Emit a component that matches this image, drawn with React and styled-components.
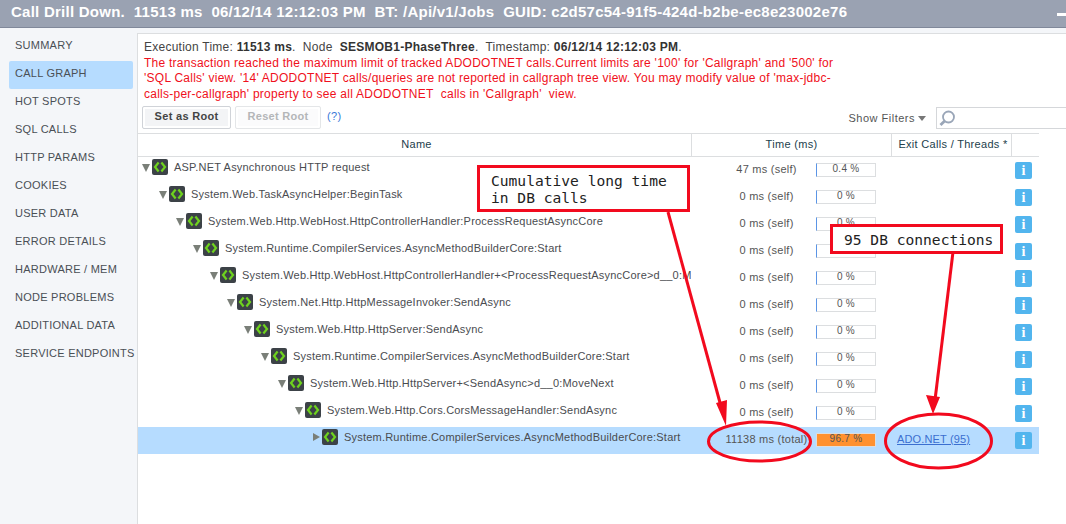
import React from "react";
import styled, { createGlobalStyle } from "styled-components";

const Global = createGlobalStyle`
  html, body { margin: 0; padding: 0; background: #f4f6f9; overflow: hidden; }
  body { font-family: "Liberation Sans", Arial, sans-serif; }
`;
const Page = styled.div`position: relative; width: 1066px; height: 524px; overflow: hidden; display: flex; flex-direction: column;`;
const TitleBar = styled.div`
  height: 27px; flex: none; background: #9aa2b2; border-bottom: 1px solid #80889a; color: #fff; font-weight: 700;
  font-size: 15px; letter-spacing: .25px; line-height: 23px; padding-left: 11px; white-space: pre; position: relative;
`;
const Minimize = styled.span`position: absolute; right: 0; top: 13px; width: 9px; height: 3px; background: #fff;`;
const Body = styled.div`flex: 1; display: flex; min-height: 0;`;
const Sidebar = styled.nav`width: 137px; flex: none; padding: 5px 4px 0 9px; box-sizing: border-box;`;
const NavItem = styled.div`
  height: 28px; line-height: 25px; padding-left: 6px; font-size: 11px; letter-spacing: .25px; color: #4a4f55; border-radius: 2px; white-space: nowrap;
  background: ${p => p.$active ? "#b6dcff" : "transparent"};
`;
const Panel = styled.main`flex: 1; margin-top: 5px; background: #fff; border-top: 1px solid #dcdee0; border-left: 1px solid #dcdee0; min-width: 0;`;
const Info = styled.div`padding: 6px 6px 0 6px; font-size: 12px; line-height: 15.5px; width: 705px; height: 66px; color: #444; letter-spacing: .25px;`;
const Strong = styled.b`color: #333;`;
const Warning = styled.div`color: #f01020;`;
const Toolbar = styled.div`height: 27px; display: flex; align-items: flex-start; padding-left: 4px;`;
const Button = styled.div`
  height: 23px; box-sizing: border-box; border: 1px solid ${p => p.$off ? "#e4e6e8" : "#d0d3d8"}; border-radius: 2px; margin-right: 4px;
  box-shadow: inset 0 0 0 2px #fff; background: ${p => p.$off ? "#fbfbfc" : "#f3f4f6"};
  font-size: 11px; font-weight: 700; letter-spacing: .3px; line-height: 19px; text-align: center; width: ${p => p.$w}px;
  color: ${p => p.$off ? "#b4b6b8" : "#444"};
`;
const Help = styled.span`color: #3b78d8; font-size: 11px; margin-left: 2px; letter-spacing: .3px; line-height: 21px;`;
const Filters = styled.div`margin-left: auto; height: 23px; display: flex; align-items: center; font-size: 11px; letter-spacing: .5px; color: #555;`;
const Caret = styled.i`width: 0; height: 0; border: 4.5px solid transparent; border-top: 5px solid #777; border-bottom: 0; margin: 1px 10px 0 3px;`;
const Search = styled.div`width: 130px; height: 22px; margin-top: 1px; box-sizing: border-box; border: 1px solid #d5d7da; border-right: 0; padding-left: 2px; display: flex; align-items: center;`;
const Table = styled.div`width: 901px; border-top: 1px solid #dcdee0;`;
const Head = styled.div`display: grid; grid-template-columns: 553px 200px 120px 28px; height: 22px; border-bottom: 1px solid #dcdee0;`;
const HeadCell = styled.div`
  font-size: 11px; letter-spacing: .3px; color: #23404c; text-align: center; line-height: 20px; white-space: nowrap; overflow: hidden;
  padding-left: ${p => p.$shift || 0}px;
  & + & { border-left: 1px solid #dcdee0; }
`;
const Row = styled.div`display: grid; grid-template-columns: 553px 125px 75px 120px 28px; height: 27px; background: ${p => p.$sel ? "#b6dcff" : "transparent"};`;
const NameCell = styled.div`display: flex; align-items: center; height: 20px; white-space: nowrap; overflow: hidden; color: #4a4c50; font-size: 11px; letter-spacing: .21px;`;
const Tri = styled.i`
  flex: none; width: 0; height: 0; margin-right: 2px;
  ${p => p.$closed
    ? "border-left: 7px solid #7a7f78; border-top: 4.5px solid transparent; border-bottom: 4.5px solid transparent; margin-left: 1px; margin-right: 2px;"
    : "border-top: 8px solid #7a7f78; border-left: 4px solid transparent; border-right: 4px solid transparent; margin-top: 2px;"}
`;
const NodeIcon = styled.svg`flex: none; width: 16px; height: 16px; margin-right: 6px; display: block;`;
const TimeCell = styled.div`font-size: 11px; letter-spacing: .25px; color: #555; text-align: center; padding: 6px 0 0 26px; line-height: 12px; white-space: nowrap;`;
const Bar = styled.div`
  width: 60px; height: 14px; box-sizing: border-box; margin-top: 6px; border: 1px solid #dcdee0;
  border-left: 1px solid #5b95e6; text-align: center; font-size: 10px; line-height: 10px; letter-spacing: .3px; color: #555;
  ${p => p.$full && "background: #ff9130; border-color: #ddd;"}
`;
const ExitCell = styled.div`padding: 6px 0 0 6px; font-size: 11px; line-height: 12px; letter-spacing: .15px;`;
const ExitLink = styled.a`color: #3b6fd0; text-decoration: underline;`;
const InfoCell = styled.div`padding: 5px 0 0 4px;`;
const InfoBtn = styled.div`
  width: 17px; height: 17px; background: #52b5ee; border-radius: 2px; color: #fff; font-weight: 700; font-size: 14px; line-height: 17px; text-align: center; font-family: "Liberation Serif", serif;
`;
const Callout = styled.div`
  position: absolute; left: ${p => p.$x}px; top: ${p => p.$y}px; width: ${p => p.$w}px; height: ${p => p.$h}px; box-sizing: border-box;
  background: #fff; border: 3px solid #f20a1e; font-family: "DejaVu Sans Mono", monospace; font-size: 14.6px; line-height: 17px; color: #222; white-space: pre;
  padding: ${p => p.$pad};
`;
const Overlay = styled.svg`position: absolute; left: 0; top: 0; pointer-events: none;`;

const Node = () => (
  <NodeIcon viewBox="0 0 16 16">
    <rect width="16" height="16" rx="2" fill="#3c4247" />
    <path d="M6.6 3.5 3 8l3.6 4.5M9.4 3.5 13 8l-3.6 4.5" fill="none" stroke="#6fd21e" strokeWidth="2.2" />
  </NodeIcon>
);

const nav = ["SUMMARY", "CALL GRAPH", "HOT SPOTS", "SQL CALLS", "HTTP PARAMS", "COOKIES", "USER DATA", "ERROR DETAILS", "HARDWARE / MEM", "NODE PROBLEMS", "ADDITIONAL DATA", "SERVICE ENDPOINTS"];
const rows = [
  ["ASP.NET Asynchronous HTTP request", "47 ms (self)", "0.4 %"],
  ["System.Web.TaskAsyncHelper:BeginTask", "0 ms (self)", "0 %"],
  ["System.Web.Http.WebHost.HttpControllerHandler:ProcessRequestAsyncCore", "0 ms (self)", "0 %"],
  ["System.Runtime.CompilerServices.AsyncMethodBuilderCore:Start", "0 ms (self)", "0 %"],
  ["System.Web.Http.WebHost.HttpControllerHandler+<ProcessRequestAsyncCore>d__0:MoveNext", "0 ms (self)", "0 %"],
  ["System.Net.Http.HttpMessageInvoker:SendAsync", "0 ms (self)", "0 %"],
  ["System.Web.Http.HttpServer:SendAsync", "0 ms (self)", "0 %"],
  ["System.Runtime.CompilerServices.AsyncMethodBuilderCore:Start", "0 ms (self)", "0 %"],
  ["System.Web.Http.HttpServer+<SendAsync>d__0:MoveNext", "0 ms (self)", "0 %"],
  ["System.Web.Http.Cors.CorsMessageHandler:SendAsync", "0 ms (self)", "0 %"],
  ["System.Runtime.CompilerServices.AsyncMethodBuilderCore:Start", "11138 ms (total)", "96.7 %"],
];

export default function App() {
  return (
    <Page>
      <Global />
      <TitleBar>{"Call Drill Down.  11513 ms  06/12/14 12:12:03 PM  BT: /Api/v1/Jobs  GUID: c2d57c54-91f5-424d-b2be-ec8e23002e76"}<Minimize /></TitleBar>
      <Body>
        <Sidebar>
          {nav.map((n, i) => <NavItem key={n} $active={i === 1}>{n}</NavItem>)}
        </Sidebar>
        <Panel>
          <Info>
            Execution Time: <Strong>11513 ms</Strong>.&nbsp; Node&nbsp; <Strong>SESMOB1-PhaseThree</Strong>.&nbsp; Timestamp: <Strong>06/12/14 12:12:03 PM</Strong>.
            <Warning>The transaction reached the maximum limit of tracked ADODOTNET calls.Current limits are '100' for 'Callgraph' and '500' for 'SQL Calls' view. '14' ADODOTNET calls/queries are not reported in callgraph tree view. You may modify value of 'max-jdbc-calls-per-callgraph' property to see all ADODOTNET&nbsp; calls in 'Callgraph'&nbsp; view.</Warning>
          </Info>
          <Toolbar>
            <Button $w={89}>Set as Root</Button>
            <Button $off $w={86}>Reset Root</Button>
            <Help>(?)</Help>
            <Filters>
              Show Filters <Caret />
              <Search>
                <svg width="18" height="18" viewBox="0 0 18 18">
                  <circle cx="9.5" cy="8" r="5.5" fill="none" stroke="#9aa6b8" strokeWidth="1.8" />
                  <path d="M5.6 12 1.5 16" stroke="#9aa6b8" strokeWidth="2.8" />
                </svg>
              </Search>
            </Filters>
          </Toolbar>
          <Table>
            <Head>
              <HeadCell $shift={4}>Name</HeadCell>
              <HeadCell>Time (ms)</HeadCell>
              <HeadCell $shift={3}>Exit Calls / Threads *</HeadCell>
              <HeadCell />
            </Head>
            {rows.map(([name, time, pct], i) => {
              const last = i === rows.length - 1;
              return (
                <Row key={i} $sel={last}>
                  <NameCell style={{ paddingLeft: 4 + i * 17 }}>
                    <Tri $closed={last} />
                    <Node />
                    {name}
                  </NameCell>
                  <TimeCell>{time}</TimeCell>
                  <div><Bar $full={last}>{pct}</Bar></div>
                  <ExitCell>{last && <ExitLink>ADO.NET (95)</ExitLink>}</ExitCell>
                  <InfoCell><InfoBtn>i</InfoBtn></InfoCell>
                </Row>
              );
            })}
          </Table>
        </Panel>
      </Body>
      <Overlay width="1066" height="524">
        <g fill="none" stroke="#f20a1e" strokeWidth="3">
          <ellipse cx="759.5" cy="441.5" rx="51" ry="19.5" />
          <ellipse cx="938.5" cy="441" rx="53" ry="27" />
          <path d="M668 212 722 410" />
          <path d="M953 252 935 400" />
        </g>
        <path d="M726 426 716 403 727 400 Z M933 414 926 395 940 397 Z" fill="#f20a1e" />
      </Overlay>
      <Callout $x={477} $y={165} $w={213} $h={47} $pad="4px 0 0 11px">{"Cumulative long time\nin DB calls"}</Callout>
      <Callout $x={830} $y={224} $w={173} $h={30} $pad="4px 0 0 11px">95 DB connections</Callout>
    </Page>
  );
}
